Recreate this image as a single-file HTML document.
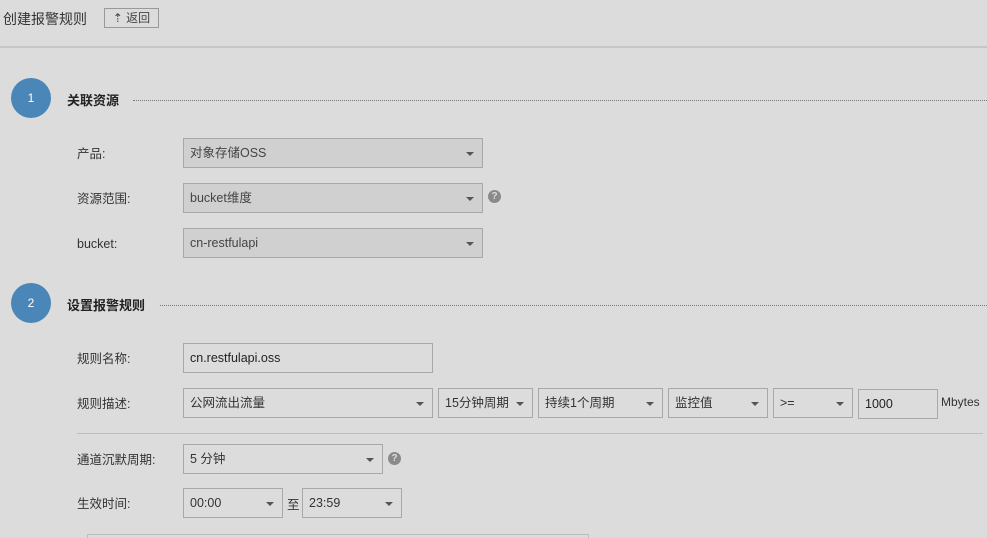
<!DOCTYPE html>
<html><head><meta charset="utf-8"><style>
html,body{margin:0;width:987px;height:538px;overflow:hidden}
body{background:#dcdcdc;font-family:"Liberation Sans","Noto Sans CJK SC",sans-serif;color:#333;position:relative}
.a{position:absolute}
.lbl{position:absolute;left:77px;font-size:12.5px;color:#333}
.sel{position:absolute;box-sizing:border-box;height:30px;border:1px solid #a8a8a8;background:#dcdcdc;font-size:12.5px;line-height:28px;padding-left:6px;color:#333}
.sel.d{background:#d0d0d0;color:#444}
.sel.c:after{content:"";position:absolute;right:8px;top:13px;border-left:4px solid transparent;border-right:4px solid transparent;border-top:4px solid #555}
.circ{position:absolute;width:40px;height:40px;border-radius:50%;background:#4a86b7;color:#fff;font-size:12px;text-align:center;line-height:40px}
.h{position:absolute;font-size:13px;font-weight:bold;color:#222}
.dot{position:absolute;border-top:1px dotted #777;height:0;right:0}
.q{position:absolute;width:13px;height:13px;border-radius:50%;background:#8a8a8a;color:#ddd;font-size:10px;font-weight:bold;text-align:center;line-height:13px}
</style></head><body>
<div class="a" style="left:3px;top:9px;font-size:14px;color:#333">创建报警规则</div>
<div class="a" style="left:104px;top:8px;width:55px;height:20px;border:1px solid #999;box-sizing:border-box;font-size:12px;line-height:18px;text-align:center;color:#444">⇡ 返回</div>
<div class="a" style="left:0;top:46px;width:987px;height:2px;background:#c6c6c6"></div>

<div class="circ" style="left:11px;top:78px">1</div>
<div class="h" style="left:67px;top:90px">关联资源</div>
<div class="dot" style="left:133px;top:100px"></div>

<div class="lbl" style="top:143px">产品:</div>
<div class="sel d c" style="left:183px;top:138px;width:300px">对象存储OSS</div>
<div class="lbl" style="top:188px">资源范围:</div>
<div class="sel d c" style="left:183px;top:183px;width:300px">bucket维度</div>
<div class="q" style="left:488px;top:190px">?</div>
<div class="lbl" style="top:237px">bucket:</div>
<div class="sel d c" style="left:183px;top:228px;width:300px">cn-restfulapi</div>

<div class="circ" style="left:11px;top:283px">2</div>
<div class="h" style="left:67px;top:295px">设置报警规则</div>
<div class="dot" style="left:160px;top:305px"></div>

<div class="lbl" style="top:348px">规则名称:</div>
<div class="sel" style="left:183px;top:343px;width:250px;color:#222">cn.restfulapi.oss</div>
<div class="lbl" style="top:393px">规则描述:</div>
<div class="sel c" style="left:183px;top:388px;width:250px">公网流出流量</div>
<div class="sel c" style="left:438px;top:388px;width:95px">15分钟周期</div>
<div class="sel c" style="left:538px;top:388px;width:125px">持续1个周期</div>
<div class="sel c" style="left:668px;top:388px;width:100px">监控值</div>
<div class="sel c" style="left:773px;top:388px;width:80px">&gt;=</div>
<div class="sel" style="left:858px;top:389px;width:80px;color:#222">1000</div>
<div class="a" style="left:941px;top:395px;font-size:12px">Mbytes</div>
<div class="a" style="left:77px;top:433px;width:906px;height:1px;background:#bdbdbd"></div>

<div class="lbl" style="top:449px">通道沉默周期:</div>
<div class="sel c" style="left:183px;top:444px;width:200px">5 分钟</div>
<div class="q" style="left:388px;top:452px">?</div>
<div class="lbl" style="top:493px">生效时间:</div>
<div class="sel c" style="left:183px;top:488px;width:100px">00:00</div>
<div class="a" style="left:287px;top:494px;font-size:12.5px">至</div>
<div class="sel c" style="left:302px;top:488px;width:100px">23:59</div>
<div class="a" style="left:87px;top:534px;width:500px;height:10px;border:1px solid #bbb"></div>
</body></html>
